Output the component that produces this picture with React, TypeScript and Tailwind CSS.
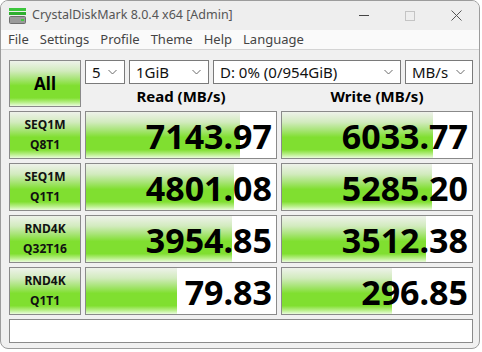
import React from 'react';

type Row = {
    label: string[];
    read: string;
    readFill: number;
    write: string;
    writeFill: number;
};

const ROWS: Row[] = [
    { label: ['SEQ1M', 'Q8T1'], read: '7143.97', readFill: 154, write: '6033.77', writeFill: 151 },
    { label: ['SEQ1M', 'Q1T1'], read: '4801.08', readFill: 148, write: '5285.20', writeFill: 150 },
    { label: ['RND4K', 'Q32T16'], read: '3954.85', readFill: 146, write: '3512.38', writeFill: 144 },
    { label: ['RND4K', 'Q1T1'], read: '79.83', readFill: 91, write: '296.85', writeFill: 110 },
];

const MENU = ['File', 'Settings', 'Profile', 'Theme', 'Help', 'Language'];

const GREEN =
    'bg-[linear-gradient(to_bottom,#eef2ea_0%,#d2ebbe_22%,#a6e474_40%,#80df30_55%,#80df30_82%,#b8ef88_92%,#eafcdc_100%)]';

const Chevron = () => (
    <svg width="9" height="6" viewBox="0 0 9 6" className="shrink-0">
        <path d="M0.5 1 L4.5 5 L8.5 1" fill="none" stroke="#6a6a6a" strokeWidth="1" />
    </svg>
);

const Select = ({ text, width }: { text: string; width: string }) => (
    <div
        className={`${width} flex h-[24px] items-center justify-between border border-[#7a7a7a] bg-white pl-[6px] pr-[7px] text-[15px] leading-none text-[#111]`}
    >
        <span>{text}</span>
        <Chevron />
    </div>
);

const ValueBox = ({ value, fill }: { value: string; fill: number }) => (
    <div className="relative h-[48px] w-[192px] border border-[#8a8a8a] bg-white">
        <div className={`absolute left-0 top-0 h-full ${GREEN}`} style={{ width: fill }} />
        <div className="relative flex h-full items-center justify-end pr-[4px] pt-[2px] text-[34px] font-bold leading-none text-black">
            {value}
        </div>
    </div>
);

const AppIcon = () => (
    <svg width="17" height="16" viewBox="0 0 17 16">
        <rect x="0" y="0" width="17" height="3" fill="#3cc63c" />
        <rect x="0" y="4" width="17" height="3" fill="#2fae2f" />
        <rect x="0.5" y="8.5" width="16" height="7" rx="1" fill="#9a9a9a" stroke="#6e6e6e" />
        <rect x="12" y="11" width="3" height="2" fill="#3cd03c" />
    </svg>
);

export default function App() {
    return (
        <div className="h-[352px] w-[482px] bg-white font-['Noto_Sans',sans-serif]">
            <div className="flex h-[349px] w-[480px] flex-col overflow-hidden rounded-[8px] border border-[#9c9c9c] bg-[#f0f0f0]">
                {/* title bar */}
                <div className="flex h-[29px] shrink-0 items-center bg-[#eeeeee] pl-[8px]">
                    <AppIcon />
                    <span className="ml-[6px] text-[12.5px] text-[#555]">CrystalDiskMark 8.0.4 x64 [Admin]</span>
                    <div className="ml-auto flex h-full items-center">
                        <div className="flex w-[46px] justify-center">
                            <div className="h-px w-[10px] bg-[#444]" />
                        </div>
                        <div className="flex w-[46px] justify-center">
                            <div className="h-[10px] w-[10px] border border-[#c4c4c4]" />
                        </div>
                        <div className="flex w-[46px] justify-center">
                            <svg width="11" height="11" viewBox="0 0 11 11">
                                <path d="M0.5 0.5 L10.5 10.5 M10.5 0.5 L0.5 10.5" stroke="#555" strokeWidth="1" />
                            </svg>
                        </div>
                    </div>
                </div>

                {/* menu bar */}
                <div className="flex h-[20px] shrink-0 items-center gap-[11px] border-b border-[#d4d4d4] bg-[#fafafa] pl-[7px] text-[13px] text-[#444]">
                    {MENU.map((m) => (
                        <span key={m}>{m}</span>
                    ))}
                </div>

                {/* main area */}
                <div className="flex flex-col gap-[4px] pl-[8px] pt-[10px]">
                    <div className="flex gap-[4px]">
                        <div
                            className={`flex h-[47px] w-[72px] items-center justify-center border border-[#8a8a8a] text-[17px] font-bold text-black ${GREEN}`}
                        >
                            All
                        </div>
                        <div className="flex flex-col">
                            <div className="flex gap-[4px]">
                                <Select text="5" width="w-[40px]" />
                                <Select text="1GiB" width="w-[80px]" />
                                <Select text="D: 0% (0/954GiB)" width="w-[188px]" />
                                <Select text="MB/s" width="w-[68px]" />
                            </div>
                            <div className="flex h-[23px] items-center gap-[4px] pt-[2px] text-[15px] font-bold text-black">
                                <div className="w-[192px] text-center">Read (MB/s)</div>
                                <div className="w-[192px] text-center">Write (MB/s)</div>
                            </div>
                        </div>
                    </div>

                    {ROWS.map((r) => (
                        <div key={r.label.join()} className="flex gap-[4px]">
                            <div
                                className={`flex h-[48px] w-[72px] flex-col items-center justify-center border border-[#8a8a8a] text-[12px] font-bold leading-[20px] text-[#111] ${GREEN}`}
                            >
                                <span>{r.label[0]}</span>
                                <span>{r.label[1]}</span>
                            </div>
                            <ValueBox value={r.read} fill={r.readFill} />
                            <ValueBox value={r.write} fill={r.writeFill} />
                        </div>
                    ))}

                    <div className="h-[24px] w-[464px] border border-[#8a8a8a] bg-white" />
                </div>
            </div>
        </div>
    );
}
